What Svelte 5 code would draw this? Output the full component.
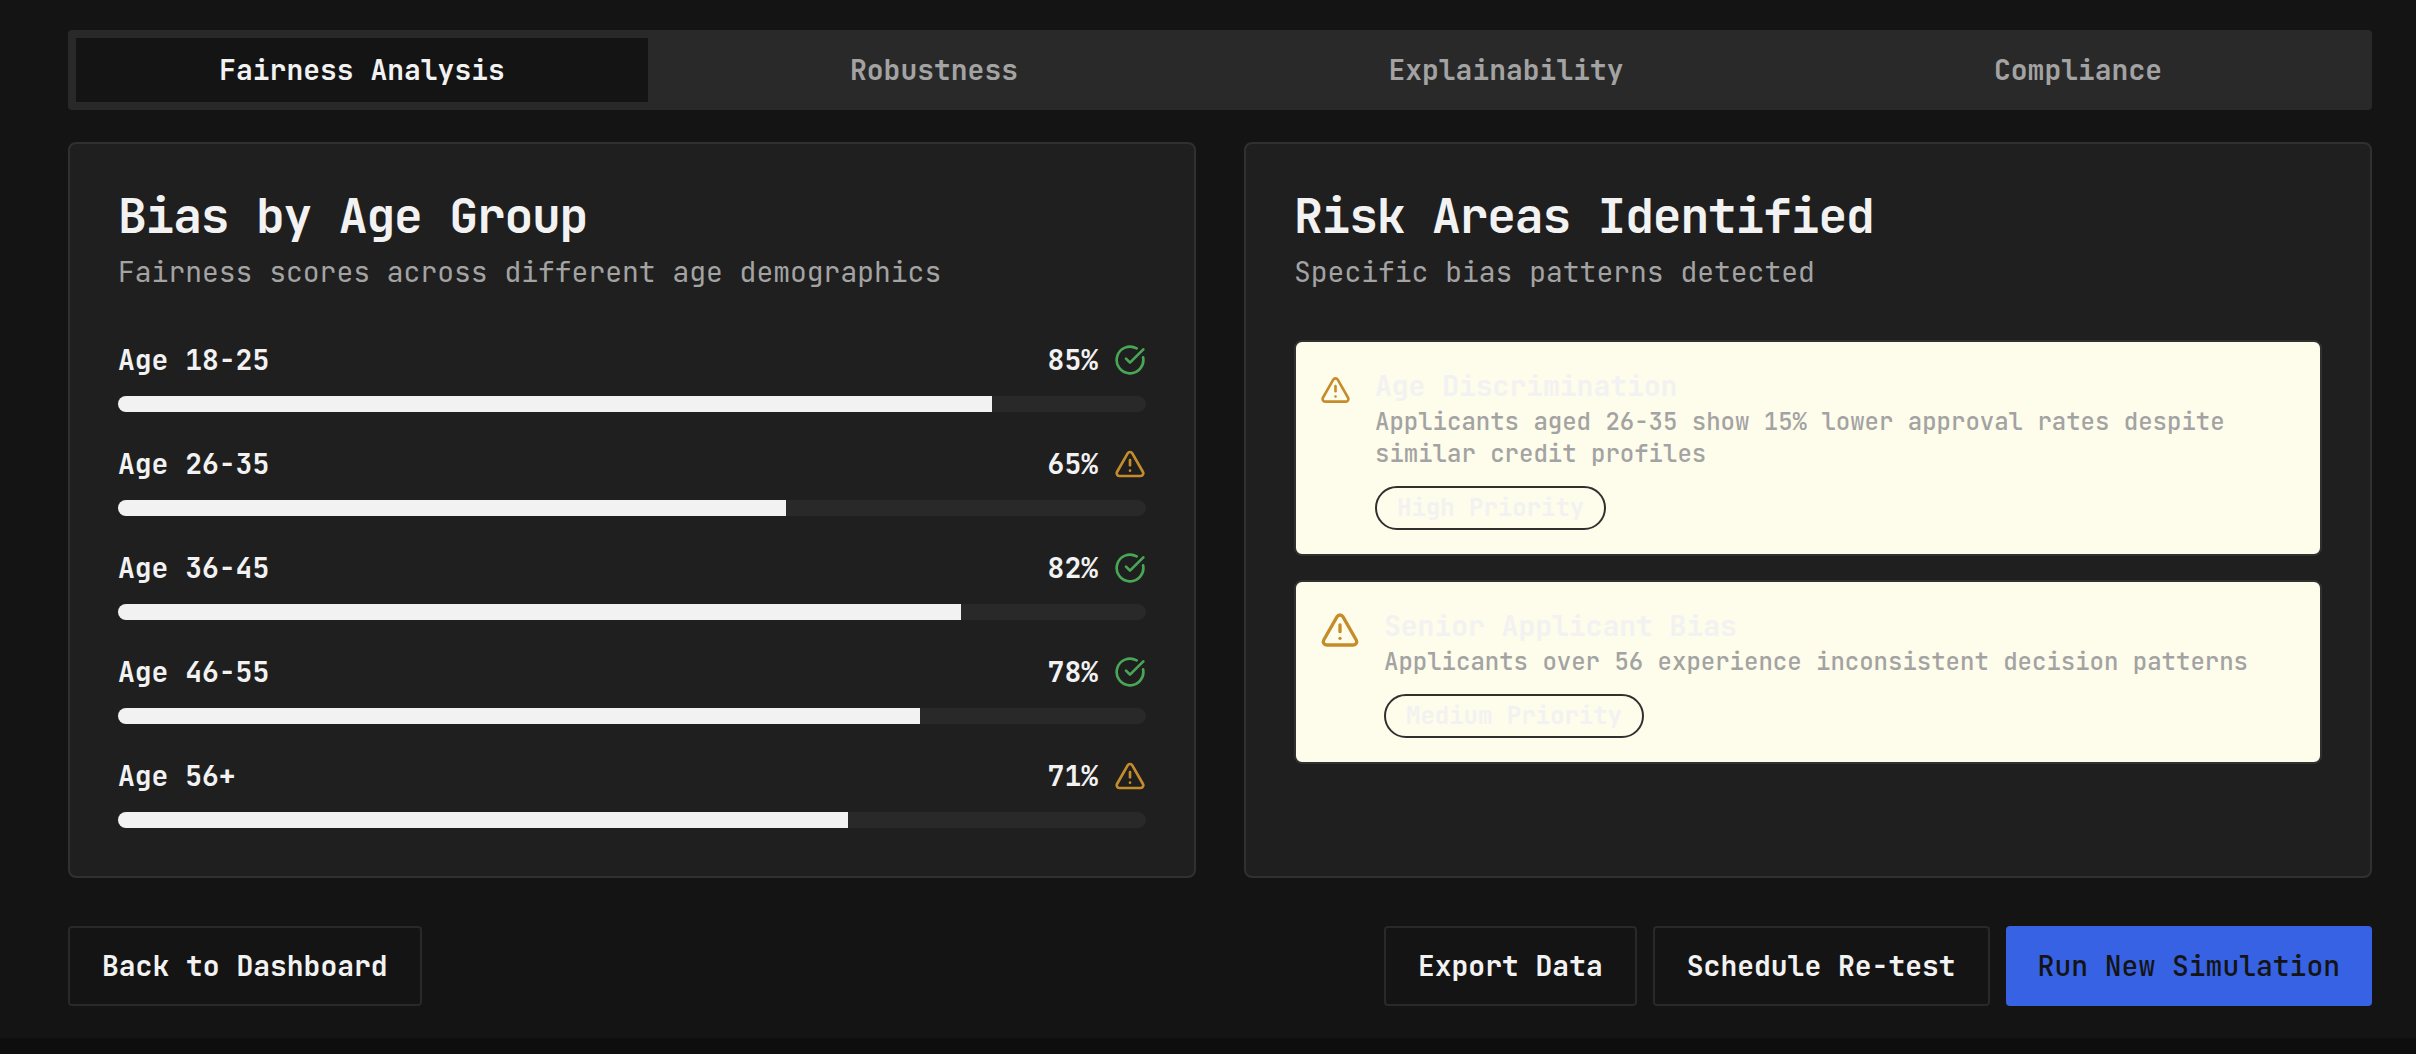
<script>
  const tabs = ['Fairness Analysis', 'Robustness', 'Explainability', 'Compliance'];
  const groups = [
    { label: 'Age 18-25', score: 85, ok: true },
    { label: 'Age 26-35', score: 65, ok: false },
    { label: 'Age 36-45', score: 82, ok: true },
    { label: 'Age 46-55', score: 78, ok: true },
    { label: 'Age 56+', score: 71, ok: false }
  ];
  const risks = [
    {
      title: 'Age Discrimination',
      text: 'Applicants aged 26-35 show 15% lower approval rates despite similar credit profiles',
      badge: 'High Priority'
    },
    {
      title: 'Senior Applicant Bias',
      text: 'Applicants over 56 experience inconsistent decision patterns',
      badge: 'Medium Priority'
    }
  ];
  let active = $state(0);
</script>

{#snippet warning()}
  <svg class="icon warn" viewBox="0 0 24 24">
    <path d="m21.73 18-8-14a2 2 0 0 0-3.48 0l-8 14A2 2 0 0 0 4 21h16a2 2 0 0 0 1.73-3" />
    <path d="M12 9v4" />
    <path d="M12 17h.01" />
  </svg>
{/snippet}

<main>
  <div class="tabs" role="tablist">
    {#each tabs as tab, i}
      <button class="tab" class:active={active === i} role="tab" aria-selected={active === i} onclick={() => (active = i)}>{tab}</button>
    {/each}
  </div>

  <div class="cards">
    <section class="card">
      <h2>Bias by Age Group</h2>
      <p class="sub">Fairness scores across different age demographics</p>
      <div class="scores">
        {#each groups as g}
          <div class="score">
            <div class="line">
              <span>{g.label}</span>
              <span class="value">
                <span>{g.score}%</span>
                {#if g.ok}
                  <svg class="icon good" viewBox="0 0 24 24">
                    <path d="M21.801 10A10 10 0 1 1 17 3.335" />
                    <path d="m9 11 3 3L22 4" />
                  </svg>
                {:else}
                  {@render warning()}
                {/if}
              </span>
            </div>
            <div class="track"><div class="fill" style="width: {g.score}%"></div></div>
          </div>
        {/each}
      </div>
    </section>

    <section class="card">
      <h2>Risk Areas Identified</h2>
      <p class="sub">Specific bias patterns detected</p>
      <div class="risks">
        {#each risks as r}
          <article class="risk">
            {@render warning()}
            <div class="body">
              <h4>{r.title}</h4>
              <p>{r.text}</p>
              <span class="badge">{r.badge}</span>
            </div>
          </article>
        {/each}
      </div>
    </section>
  </div>

  <footer>
    <button class="btn">Back to Dashboard</button>
    <div class="actions">
      <button class="btn">Export Data</button>
      <button class="btn">Schedule Re-test</button>
      <button class="btn primary">Run New Simulation</button>
    </div>
  </footer>
</main>

<style>
  :global(body) {
    margin: 0;
    background: #0e0e0e;
  }
  * {
    box-sizing: border-box;
  }
  main {
    height: 1038px;
    padding: 30px 44px 32px 68px;
    background: #141414;
    color: #f2f2f2;
    font-family: 'JetBrains Mono', 'DejaVu Sans Mono', 'Liberation Mono', monospace;
    font-size: 28px;
    line-height: 40px;
    -webkit-font-smoothing: antialiased;
  }
  h2, h4, p {
    margin: 0;
  }
  button {
    font: inherit;
    color: inherit;
    cursor: pointer;
  }
  .tab, .line, h4, .btn {
    font-weight: 600;
  }
  .tabs {
    display: grid;
    grid-template-columns: repeat(4, 1fr);
    height: 80px;
    padding: 8px;
    border-radius: 4px;
    background: #292929;
  }
  .tab {
    padding: 0;
    border: 0;
    background: transparent;
    color: #a3a3a3;
  }
  .tab.active {
    background: #141414;
    color: #f2f2f2;
  }
  .cards {
    display: grid;
    grid-template-columns: 1fr 1fr;
    gap: 48px;
    margin-top: 32px;
  }
  .card {
    height: 736px;
    padding: 48px;
    border: 2px solid #303030;
    border-radius: 8px;
    background: #1f1f1f;
  }
  h2 {
    font-size: 48px;
    line-height: 48px;
    font-weight: 700;
    letter-spacing: -0.025em;
  }
  .sub {
    margin-top: 12px;
    font-weight: 450;
    color: #a3a3a3;
  }
  .scores {
    display: grid;
    gap: 32px;
    margin-top: 48px;
  }
  .score {
    display: grid;
    gap: 16px;
  }
  .line {
    display: flex;
    justify-content: space-between;
    height: 40px;
  }
  .value {
    display: flex;
    align-items: center;
    gap: 16px;
  }
  .icon {
    flex: none;
    width: 32px;
    height: 32px;
    fill: none;
    stroke: currentColor;
    stroke-width: 2;
    stroke-linecap: round;
    stroke-linejoin: round;
  }
  .good {
    color: #4aa657;
  }
  .warn {
    color: #c58c2c;
  }
  .track {
    height: 16px;
    overflow: hidden;
    border-radius: 8px;
    background: #292929;
  }
  .fill {
    height: 100%;
    background: #f2f2f2;
  }
  .risks {
    display: grid;
    gap: 24px;
    margin-top: 48px;
  }
  .risk {
    display: flex;
    align-items: flex-start;
    gap: 24px;
    padding: 24px;
    border: 2px solid #303030;
    border-radius: 8px;
    background: #fefcea;
  }
  .risk .icon {
    width: 40px;
    height: 40px;
    margin-top: 4px;
  }
  .risk:first-child .icon {
    width: 31px;
  }
  .body {
    flex: 1;
  }
  h4 {
    font-size: 28px;
    line-height: 40px;
  }
  .body p {
    font-size: 24px;
    font-weight: 500;
    line-height: 32px;
    color: #a3a3a3;
  }
  .badge {
    display: block;
    width: fit-content;
    margin-top: 16px;
    padding: 4px 20px;
    border: 2px solid #303030;
    border-radius: 22px;
    font-size: 24px;
    font-weight: 700;
    line-height: 32px;
  }
  footer {
    display: flex;
    justify-content: space-between;
    margin-top: 48px;
  }
  .actions {
    display: flex;
    gap: 16px;
  }
  .btn {
    height: 80px;
    padding: 0 32px;
    border: 2px solid #292929;
    border-radius: 4px;
    background: #141414;
    white-space: nowrap;
  }
  .btn.primary {
    border: 0;
    background: #3662e3;
    color: #141414;
    font-weight: 500;
  }
</style>
